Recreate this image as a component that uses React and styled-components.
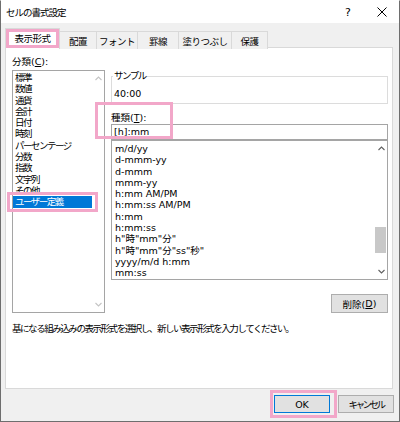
import styled, { createGlobalStyle } from 'styled-components'

const GlobalStyle = createGlobalStyle`
    html, body {
        margin: 0;
        padding: 0;
        background: #fff;
    }

    body {
        font-family: "DejaVu Sans", "Noto Sans CJK JP", sans-serif;
        font-size: 9.5px;
        color: #000;
    }

    * {
        box-sizing: border-box;
    }
`

const PINK = '#f2a7c9'

const CATEGORIES = [
    '標準', '数値', '通貨', '会計', '日付', '時刻', 'パーセンテージ',
    '分数', '指数', '文字列', 'その他', 'ユーザー定義',
]

const FORMATS = [
    'm/d/yy', 'd-mmm-yy', 'd-mmm', 'mmm-yy', 'h:mm AM/PM', 'h:mm:ss AM/PM',
    'h:mm', 'h:mm:ss', 'h"時"mm"分"', 'h"時"mm"分"ss"秒"', 'yyyy/m/d h:mm', 'mm:ss',
]

const TABS = [
    { label: '表示形式', width: 55, active: true },
    { label: '配置', width: 38 },
    { label: 'フォント', width: 42 },
    { label: '罫線', width: 42 },
    { label: '塗りつぶし', width: 54 },
    { label: '保護', width: 37 },
]

const Window = styled.div`
    width: 400px;
    height: 422px;
    border: 1px solid #6e6e6e;
    border-top-color: #ffffff;
    background: #f0f0f0;
    display: flex;
    flex-direction: column;
`

const TitleBar = styled.div`
    height: 22px;
    background: #fff;
    display: flex;
    align-items: center;
    padding-left: 5px;
`

const TitleText = styled.span`
    flex: 1;
    letter-spacing: -1px;
`

const TitleButton = styled.span`
    width: 34px;
    height: 22px;
    display: flex;
    align-items: center;
    justify-content: center;
    font-size: 11px;
`

const Body = styled.div`
    padding: 5px 6px 0 4px;
`

const TabRow = styled.div`
    height: 21px;
    display: flex;
    align-items: flex-end;
    position: relative;
    z-index: 1;
`

const Tab = styled.div`
    position: relative;
    width: ${p => p.$width}px;
    height: ${p => (p.$active ? 21 : 18)}px;
    margin-left: ${p => (p.$first ? 0 : -1)}px;
    border: 1px solid #d9d9d9;
    border-bottom: none;
    background: ${p => (p.$active ? '#fff' : '#f0f0f0')};
    display: flex;
    align-items: center;
    justify-content: center;
    padding-bottom: ${p => (p.$active ? 2 : 0)}px;
    letter-spacing: -0.5px;
`

const Highlight = styled.span`
    position: absolute;
    top: ${p => p.$top}px;
    left: ${p => p.$left}px;
    right: ${p => p.$right}px;
    bottom: ${p => p.$bottom}px;
    border: 3px solid ${PINK};
    pointer-events: none;
    z-index: 2;
`

const Panel = styled.div`
    margin-top: -2px;
    height: 342px;
    background: #fff;
    border: 1px solid #d9d9d9;
    padding: 8px 4px 0 6px;
`

const Columns = styled.div`
    display: grid;
    grid-template-columns: 93px 277px;
    column-gap: 6px;
`

const Column = styled.div`
    display: flex;
    flex-direction: column;
    padding-top: ${p => p.$pad || 0}px;
`

const Label = styled.div`
    height: 12px;
    line-height: 12px;
    margin-bottom: ${p => p.$gap || 0}px;

    u {
        text-decoration: underline;
    }
`

const ListBox = styled.div`
    height: ${p => p.$height}px;
    border: 1px solid #a5a5a5;
    background: #fff;
    display: grid;
    grid-template-columns: 1fr 12px;
`

const Items = styled.div`
    padding-top: ${p => p.$pad}px;
    letter-spacing: ${p => p.$ls || 0}px;
`

const Item = styled.div`
    position: relative;
    height: 11.3px;
    line-height: 11.3px;
    padding-left: ${p => p.$indent}px;
    white-space: nowrap;
    background: ${p => (p.$selected ? '#0078d7' : 'transparent')};
    color: ${p => (p.$selected ? '#fff' : '#000')};
`

const ScrollBar = styled.div`
    display: flex;
    flex-direction: column;
    justify-content: space-between;
`

const ScrollTrack = styled.div`
    flex: 1;
    position: relative;
`

const Thumb = styled.div`
    position: absolute;
    left: 0;
    right: 1px;
    background: #c8c8c8;
`

const Arrow = styled.div`
    height: 15px;
    display: flex;
    align-items: center;
    justify-content: center;
`

const Chevron = ({ down, color }) => (
    <svg width="7" height="5" viewBox="0 0 7 5">
        <polyline
            points={down ? '0.5,1 3.5,4 6.5,1' : '0.5,4 3.5,1 6.5,4'}
            fill="none"
            stroke={color}
            strokeWidth="1.1"
        />
    </svg>
)

const GroupBox = styled.div`
    position: relative;
    height: 28px;
    border: 1px solid #dcdcdc;
    padding: 11px 0 0 2px;
    line-height: 12px;
`

const Legend = styled.span`
    position: absolute;
    top: -7px;
    left: 1px;
    background: #fff;
    padding: 0 1px;
    line-height: 12px;
    letter-spacing: -1.5px;
`

const TypeField = styled.div`
    position: relative;
    margin-top: 8px;
`

const Input = styled.div`
    height: 16px;
    border: 1px solid #a5a5a5;
    padding-left: 2px;
    line-height: 14px;
`

const Button = styled.div`
    position: relative;
    width: ${p => p.$width}px;
    height: ${p => p.$height}px;
    background: #e1e1e1;
    border: 1px solid ${p => (p.$default ? '#0078d7' : '#adadad')};
    display: flex;
    align-items: center;
    justify-content: center;
    align-self: ${p => (p.$end ? 'flex-end' : 'auto')};
    margin-top: ${p => p.$mt || 0}px;
    letter-spacing: ${p => p.$ls || 0}px;
`

const Description = styled.div`
    margin-top: 10px;
    line-height: 12px;
    letter-spacing: -1.45px;
    white-space: nowrap;
`

const Footer = styled.div`
    display: flex;
    justify-content: flex-end;
    gap: 8px;
    padding: 6px 5px 0 0;
`

const App = () => {
    return (
        <>
            <GlobalStyle />
            <Window>
                <TitleBar>
                    <TitleText>セルの書式設定</TitleText>
                    <TitleButton>?</TitleButton>
                    <TitleButton>
                        <svg width="10" height="10" viewBox="0 0 10 10">
                            <path d="M0.5 0.5 L9.5 9.5 M9.5 0.5 L0.5 9.5" stroke="#000" strokeWidth="1" />
                        </svg>
                    </TitleButton>
                </TitleBar>
                <Body>
                    <TabRow>
                        {TABS.map((t, i) => (
                            <Tab key={t.label} $width={t.width} $active={t.active} $first={i === 0}>
                                {t.label}
                                {t.active && <Highlight $top={0} $left={0} $right={0} $bottom={1} />}
                            </Tab>
                        ))}
                    </TabRow>
                    <Panel>
                        <Columns>
                            <Column>
                                <Label $gap={2}>分類(<u>C</u>):</Label>
                                <ListBox $height={243}>
                                    <Items $pad={1} $ls={-1.5}>
                                        {CATEGORIES.map(c => (
                                            <Item key={c} $indent={2} $selected={c === 'ユーザー定義'}>
                                                {c}
                                                {c === 'ユーザー定義' && (
                                                    <Highlight $top={-4} $left={-6} $right={-6} $bottom={-4} />
                                                )}
                                            </Item>
                                        ))}
                                    </Items>
                                    <ScrollBar>
                                        <Arrow><Chevron color="#c4c4c4" /></Arrow>
                                        <Arrow><Chevron down color="#c4c4c4" /></Arrow>
                                    </ScrollBar>
                                </ListBox>
                            </Column>
                            <Column $pad={20}>
                                <GroupBox>
                                    <Legend>サンプル</Legend>
                                    40:00
                                </GroupBox>
                                <TypeField>
                                    <Label>種類(<u>T</u>):</Label>
                                    <Input>[h]:mm</Input>
                                    <Highlight $top={-10} $left={-16} $right={215} $bottom={1} />
                                </TypeField>
                                <ListBox $height={140}>
                                    <Items $pad={2}>
                                        {FORMATS.map(f => (
                                            <Item key={f} $indent={3}>{f}</Item>
                                        ))}
                                    </Items>
                                    <ScrollBar>
                                        <Arrow><Chevron color="#606060" /></Arrow>
                                        <ScrollTrack>
                                            <Thumb style={{ top: 71, height: 26 }} />
                                        </ScrollTrack>
                                        <Arrow><Chevron down color="#606060" /></Arrow>
                                    </ScrollBar>
                                </ListBox>
                                <Button $width={57} $height={19} $end $mt={14}>
                                    削除(<u>D</u>)
                                </Button>
                            </Column>
                        </Columns>
                        <Description>
                            基になる組み込みの表示形式を選択し、新しい表示形式を入力してください。
                        </Description>
                    </Panel>
                </Body>
                <Footer>
                    <Button $width={56} $height={18} $default>
                        OK
                        <Highlight $top={-6} $left={-5} $right={-8} $bottom={-6} />
                    </Button>
                    <Button $width={56} $height={18} $ls={-2.5}>キャンセル</Button>
                </Footer>
            </Window>
        </>
    )
}

export default App
